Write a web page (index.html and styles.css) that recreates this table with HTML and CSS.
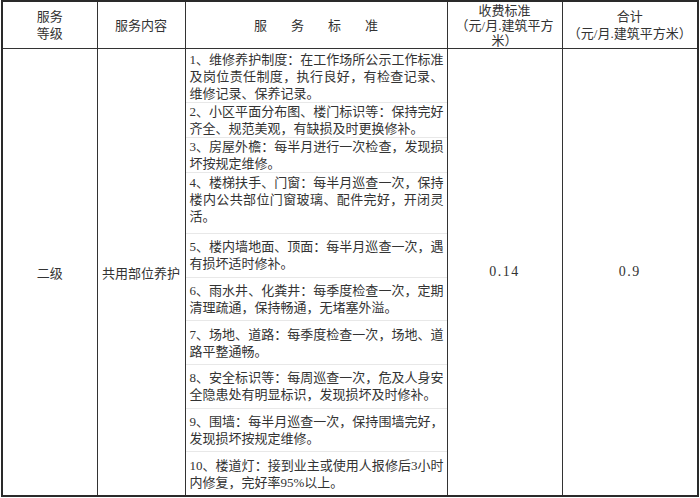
FILE: index.html
```html
<!DOCTYPE html>
<html lang="zh-CN">
<head>
<meta charset="utf-8">
<title>服务标准</title>
<link rel="stylesheet" href="styles.css">
</head>
<body>
<table class="grid">
  <colgroup>
    <col class="c1"><col class="c2"><col class="c3"><col class="c4"><col class="c5">
  </colgroup>
  <thead>
    <tr>
      <th class="lvl">服务<br>等级</th>
      <th>服务内容</th>
      <th class="spaced">服务标准</th>
      <th class="fee">收费标准<br>（元/月.建筑平方<br>米）</th>
      <th class="lvl">合计<br>（元/月.建筑平方米）</th>
    </tr>
  </thead>
  <tbody>
    <tr>
      <td>二级</td>
      <td>共用部位养护</td>
      <td class="std">
        <div class="items">
          <div class="item first">
            <span class="ln full">1、维修养护制度：在工作场所公示工作标准</span>
            <span class="ln full">及岗位责任制度，执行良好，有检查记录、</span>
            <span class="ln">维修记录、保养记录。</span>
          </div>
          <div class="item tight">
            <span class="ln full">2、小区平面分布图、楼门标识等：保持完好</span>
            <span class="ln">齐全、规范美观，有缺损及时更换修补。</span>
          </div>
          <div class="item tight">
            <span class="ln full">3、房屋外檐：每半月进行一次检查，发现损</span>
            <span class="ln">坏按规定维修。</span>
          </div>
          <div class="item fourth">
            <span class="ln full">4、楼梯扶手、门窗：每半月巡查一次，保持</span>
            <span class="ln full">楼内公共部位门窗玻璃、配件完好，开闭灵</span>
            <span class="ln">活。</span>
          </div>
          <div class="item grow">
            <span class="ln full">5、楼内墙地面、顶面：每半月巡查一次，遇</span>
            <span class="ln">有损坏适时修补。</span>
          </div>
          <div class="item grow">
            <span class="ln full">6、雨水井、化粪井：每季度检查一次，定期</span>
            <span class="ln">清理疏通，保持畅通，无堵塞外溢。</span>
          </div>
          <div class="item grow">
            <span class="ln full">7、场地、道路：每季度检查一次，场地、道</span>
            <span class="ln">路平整通畅。</span>
          </div>
          <div class="item grow">
            <span class="ln full">8、安全标识等：每周巡查一次，危及人身安</span>
            <span class="ln">全隐患处有明显标识，发现损坏及时修补。</span>
          </div>
          <div class="item grow">
            <span class="ln full">9、围墙：每半月巡查一次，保持围墙完好，</span>
            <span class="ln">发现损坏按规定维修。</span>
          </div>
          <div class="item grow">
            <span class="ln full">10、楼道灯：接到业主或使用人报修后3小时</span>
            <span class="ln">内修复，完好率95%以上。</span>
          </div>
        </div>
      </td>
      <td class="num">0.14</td>
      <td class="num">0.9</td>
    </tr>
  </tbody>
</table>
</body>
</html>
```

FILE: styles.css
```css
html, body {
  margin: 0;
  padding: 0;
  background: #ffffff;
}

body {
  font-family: "Liberation Serif", "Noto Sans CJK SC", serif;
  font-size: 13px;
  color: #333333;
}

.grid {
  border-collapse: collapse;
  table-layout: fixed;
  width: 698px;
  margin: 0 0 0 1px;
  border: 2px solid #2a2a2a;
}

.c1 { width: 95px; }
.c2 { width: 88px; }
.c3 { width: 262px; }
.c4 { width: 115px; }
.c5 { width: 136px; }

.grid th,
.grid td {
  border: 1px solid #333333;
  padding: 0;
  text-align: center;
  vertical-align: middle;
  font-weight: 400;
}

.grid th {
  height: 46px;
  line-height: 15px;
}

.grid th.lvl {
  line-height: 17px;
}

.grid th.spaced {
  letter-spacing: 24px;
  padding-left: 24px;
}

.grid td {
  height: 446px;
}

.grid td.num {
  font-size: 14px;
  letter-spacing: 1.5px;
}

.grid td.std {
  padding: 0;
  vertical-align: top;
}

.items {
  display: flex;
  flex-direction: column;
  height: 446px;
}

.item {
  display: flex;
  flex-direction: column;
  justify-content: center;
  padding: 0 3px 0 4px;
  line-height: 17px;
  text-align: left;
  border-top: 1px solid #e8e8e8;
}

.item.first {
  flex: none;
  border-top: none;
  padding-top: 2px;
}

.item.tight {
  flex: none;
}

.item.fourth {
  flex: none;
  padding-top: 1px;
  padding-bottom: 8px;
}

.item.grow {
  flex: 1 1 0;
}

.ln {
  display: block;
  white-space: nowrap;
}

.ln.full {
  text-align: justify;
  text-align-last: justify;
}
```
